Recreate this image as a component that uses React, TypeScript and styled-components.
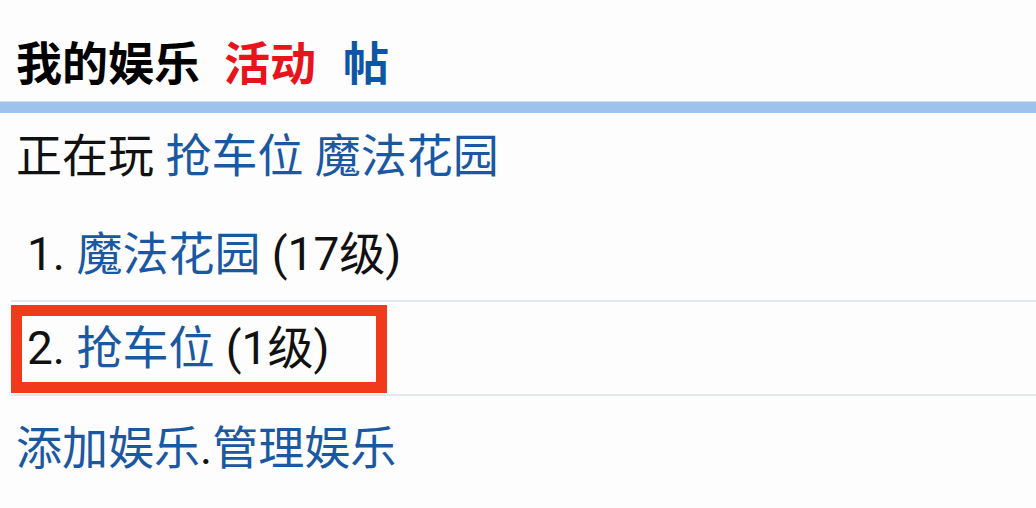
import styled, { createGlobalStyle } from "styled-components";

const GlobalStyle = createGlobalStyle`
  html, body {
    margin: 0;
    padding: 0;
    background: #fdfdfd;
  }
  body {
    font-family: Roboto, "Noto Sans CJK SC", sans-serif;
    color: #111;
  }
`;

const games = [
  { name: "魔法花园", level: 17 },
  { name: "抢车位", level: 1 },
];

export default function App() {
  return (
    <>
      <GlobalStyle />
      <Page>
        <Header>
          <TitleText>我的娱乐</TitleText>
          <TitleLink tone="#e8141c" gap={24}>活动</TitleLink>
          <TitleLink tone="#0f55a5" gap={27}>帖</TitleLink>
        </Header>
        <Bar />
        <Playing>
          正在玩 <Link>抢车位</Link> <Link>魔法花园</Link>
        </Playing>
        <GameList>
          {games.map((game, index) => (
            <GameItem key={game.name}>
              {index + 1}. <Link>{game.name}</Link> ({game.level}级)
              {index === 1 && <Highlight />}
            </GameItem>
          ))}
        </GameList>
        <Footer>
          <Link>添加娱乐</Link>.<Link>管理娱乐</Link>
        </Footer>
      </Page>
    </>
  );
}

const Page = styled.div`
  display: flex;
  flex-direction: column;
  width: 1036px;
  font-size: 46px;
  line-height: 46px;
`;

const Header = styled.div`
  display: flex;
  align-items: center;
  height: 101px;
  padding: 18px 16px 0;
  box-sizing: border-box;
`;

const TitleText = styled.span`
  font-family: "Noto Sans CJK SC", sans-serif;
  font-weight: 700;
  font-size: 46px;
  color: #000;
`;

const TitleLink = styled.span<{ tone: string; gap: number }>`
  font-family: "Noto Sans CJK SC", sans-serif;
  font-weight: 700;
  font-size: 46px;
  margin-left: ${(p) => p.gap}px;
  color: ${(p) => p.tone};
`;

const Bar = styled.div`
  height: 12px;
  background: #9dc3ec;
  border-top: 1px solid #c9e3f3;
  box-sizing: border-box;
`;

const Link = styled.span`
  color: #1b58a2;
`;

const Playing = styled.div`
  padding: 20px 16px 0;
`;

const GameList = styled.ul`
  list-style: none;
  margin: 29px 0 0 11px;
  padding: 0;
`;

const GameItem = styled.li`
  position: relative;
  padding: 23px 0 23px 16px;
  border-bottom: 2px solid #e4e7eb;
`;

const Highlight = styled.div`
  position: absolute;
  left: 0;
  top: 3px;
  width: 376px;
  height: 88px;
  border: 11px solid #f03a1b;
  box-sizing: border-box;
  pointer-events: none;
`;

const Footer = styled.div`
  padding: 29px 16px 0;
`;
